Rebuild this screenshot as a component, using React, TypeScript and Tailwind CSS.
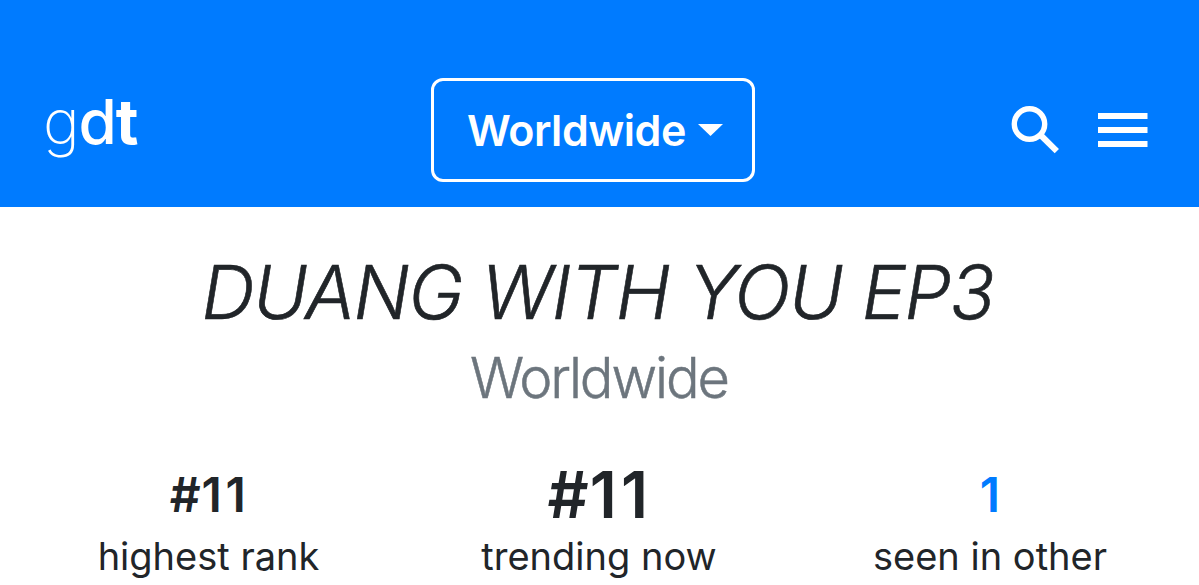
import React from 'react';

const stats = [
  {
    prefix: '#',
    value: '11',
    label: 'highest rank',
    box: 'w-[417px]',
    valueStyle: 'text-[48px] pl-[2px] font-semibold',
    digits: 'tracking-[3.6px]',
  },
  {
    prefix: '#',
    value: '11',
    label: 'trending now',
    box: 'w-[364px]',
    valueStyle: 'text-[64px] pl-[2px] font-semibold',
    digits: 'tracking-[4.4px]',
  },
  {
    prefix: '',
    value: '1',
    label: 'seen in other',
    box: 'w-[418px]',
    valueStyle: 'text-[48px] font-semibold text-[#007bff]',
    digits: '',
  },
];

const App = () => {
  return (
    <div className="w-[1199px] h-[585px] overflow-hidden bg-white font-['Inter',sans-serif] text-[#212529]">
      <header className="flex h-[207px] items-start bg-[#007bff] text-white">
        <a className="ml-[43px] mt-[82px] w-[388px] text-[62px] leading-[79px] tracking-[-1.2px]">
          <span className="font-extralight">g</span>
          <span className="font-medium">d</span>
          <span className="font-bold">t</span>
        </a>

        <button className="mt-[78px] flex h-[104px] w-[324px] items-center rounded-[12px] border-[3px] border-white pl-[33px] text-[43px] font-semibold">
          <span className="whitespace-nowrap tracking-[-0.5px]">Worldwide</span>
          <svg className="ml-[12px] h-[12px] w-[25px] shrink-0" viewBox="0 0 25 12" fill="currentColor">
            <path d="M0 0h25L12.500 12z" />
          </svg>
        </button>

        <svg className="ml-[256px] mt-[106px] h-[48px] w-[49px]" viewBox="0 0 49 48" fill="none" stroke="currentColor">
          <circle cx="18.500" cy="18" r="15.200" strokeWidth="5.400" />
          <path d="M29.500 29l16.300 16.200" strokeWidth="6" />
        </svg>

        <svg className="ml-[38px] mt-[113px] h-[34px] w-[50px]" viewBox="0 0 50 34" fill="currentColor">
          <path d="M0 0h49.500v6H0zM0 14h49.500v6H0zM0 28h49.500v6H0z" />
        </svg>
      </header>

      <main>
        <h1 className="pr-[4px] pt-[38px] text-center text-[74px] font-light italic leading-[94px] tracking-[-1.3px] [-webkit-text-stroke:0.6px]">
          DUANG WITH YOU EP3
        </h1>
        <h2 className="pr-[1px] pt-[4px] text-center text-[56px] font-light leading-[70px] tracking-[-2.1px] text-[#6c757d] [-webkit-text-stroke:0.5px]">
          Worldwide
        </h2>

        <div className="flex pt-[44px] text-center">
          {stats.map((stat, index) => (
            <div key={index} className={stat.box}>
              <div className={`h-[76px] leading-[76px] ${stat.valueStyle}`}>
                {stat.prefix && <span className="tracking-[1px]">{stat.prefix}</span>}
                <span className={stat.digits}>{stat.value}</span>
              </div>
              <div className="text-[38px] leading-[47px]">{stat.label}</div>
            </div>
          ))}
        </div>
      </main>
    </div>
  );
};

export default App;
